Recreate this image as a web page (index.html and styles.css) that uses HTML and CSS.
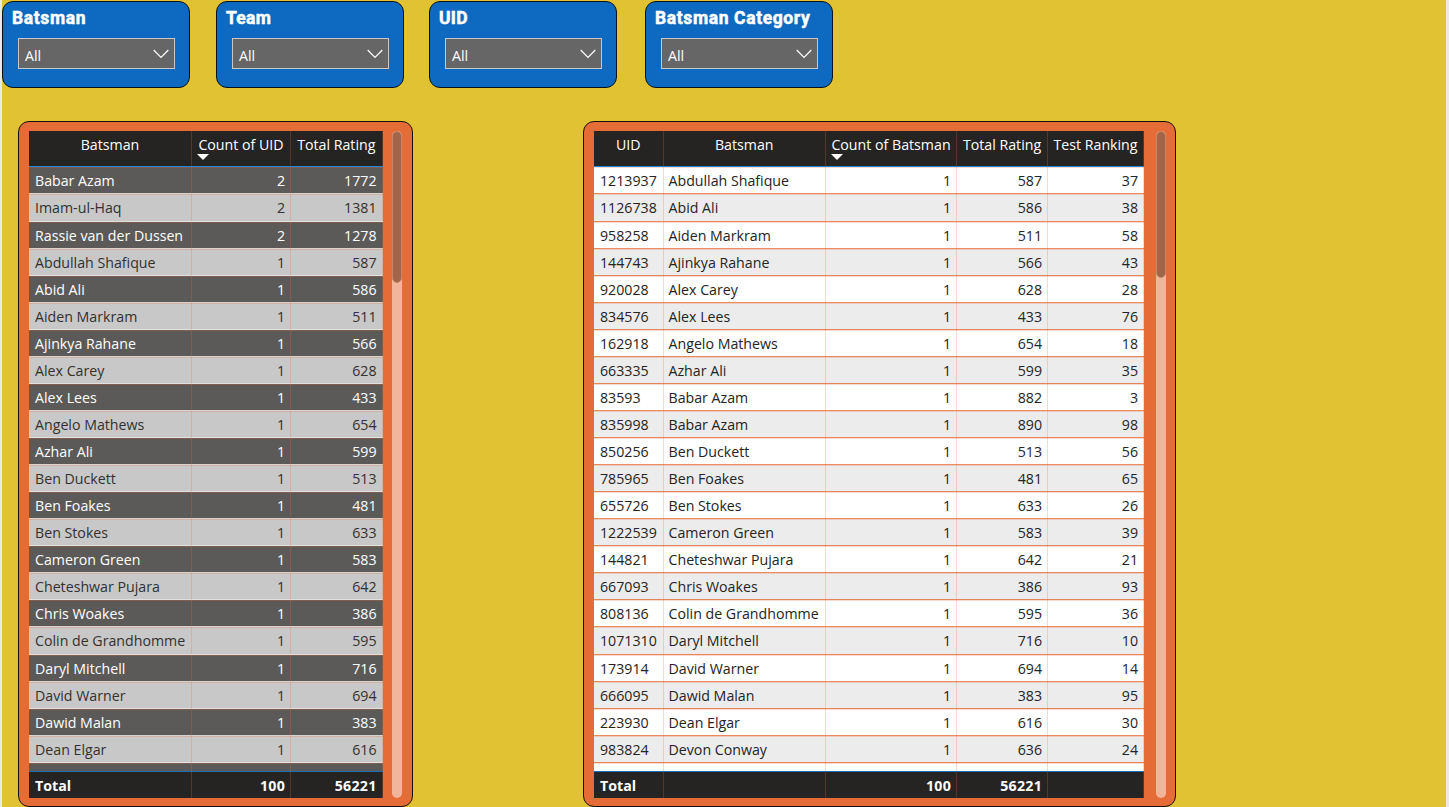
FILE: index.html
```html
<!DOCTYPE html>
<html lang="en">
<head>
<meta charset="utf-8">
<title>Batsman Rankings</title>
<link rel="stylesheet" href="styles.css">
</head>
<body>
<main class="report">
  <header class="slicers">
    <section class="slicer"><h2>Batsman</h2><div class="dropdown"><span>All</span><svg class="chevron" viewBox="0 0 16 10"><path d="M.7 1 8 8.3 15.3 1"/></svg></div></section>
    <section class="slicer"><h2 class="short">Team</h2><div class="dropdown"><span>All</span><svg class="chevron" viewBox="0 0 16 10"><path d="M.7 1 8 8.3 15.3 1"/></svg></div></section>
    <section class="slicer"><h2 class="short">UID</h2><div class="dropdown"><span>All</span><svg class="chevron" viewBox="0 0 16 10"><path d="M.7 1 8 8.3 15.3 1"/></svg></div></section>
    <section class="slicer"><h2>Batsman Category</h2><div class="dropdown"><span>All</span><svg class="chevron" viewBox="0 0 16 10"><path d="M.7 1 8 8.3 15.3 1"/></svg></div></section>
  </header>
  <div class="panels">
    <section class="panel dark">
      <div class="grid">
        <div class="row head"><span>Batsman</span><span class="sorted">Count of UID</span><span>Total Rating</span></div>
        <div class="body" id="ratings"></div>
        <div class="row total"><span>Total</span><span class="num">100</span><span class="num">56221</span></div>
      </div>
      <div class="track"><div class="thumb"></div></div>
    </section>
    <section class="panel light">
      <div class="grid">
        <div class="row head"><span>UID</span><span>Batsman</span><span class="sorted">Count of Batsman</span><span>Total Rating</span><span>Test Ranking</span></div>
        <div class="body" id="rankings"></div>
        <div class="row total"><span>Total</span><span></span><span class="num">100</span><span class="num">56221</span><span></span></div>
      </div>
      <div class="track"><div class="thumb"></div></div>
    </section>
  </div>
</main>
<script src="app.js"></script>
</body>
</html>
```
FILE: styles.css
```css
* { box-sizing: border-box; }
body { margin: 0; background: #ebe9e4; font: 14.2px "Open Sans", "Noto Sans", sans-serif; overflow: hidden; }
.report { height: 807px; margin: 0 3px 0 2px; background: #e0c232; }
.slicers { display: flex; height: 121px; padding-top: 1px; }
.slicer { width: 188px; height: 87px; margin-right: 26px; padding: 5px 14px 0 9px; background: #0e6ac0; border: 1.5px solid #07121c; border-radius: 11px; color: #fff; }
.slicer:nth-child(2) { margin-right: 25px; }
.slicer:nth-child(3) { margin-right: 28px; }
.slicer h2 { margin: 0 0 9px; height: 22px; font: 700 17.5px/23px Roboto, sans-serif; letter-spacing: .62px; white-space: nowrap; -webkit-text-stroke: .5px #fff; }
.slicer .short { letter-spacing: .3px; }
.dropdown { display: flex; align-items: center; justify-content: space-between; width: 157px; height: 31px; margin-left: 6px; padding: 3px 5px 0 6px; background: #666; border: 1px solid #c8c8c8; }
.chevron { width: 16px; height: 10px; margin-top: -2px; fill: none; stroke: #fff; stroke-width: 1.2; }
.panels { display: flex; gap: 170px; padding-left: 16px; }
.panel { display: flex; justify-content: space-between; height: 686px; padding: 9px 9px 8px 10px; background: #e66c37; border: 1px solid #1a100b; border-radius: 11px; }
.dark { width: 395px; padding-right: 10px; }
.light { width: 593px; }
.grid { height: 667px; color: #252423; }
.dark .grid { width: 353.5px; }
.light .grid { width: 550px; }
.row { display: grid; height: 27.067px; }
.dark .row { grid-template-columns: 163px 99px 91.5px; }
.light .row { grid-template-columns: 69.5px 162.5px 131px 91px 96px; }
.row span { padding: 0 6px; line-height: 27px; white-space: nowrap; border-right: 1px solid #e66c3740; }
.light .row span:nth-child(2) { padding-left: 5px; }
.row .num { text-align: right; padding-right: 5px; }
.head { height: 36px; background: #252423; color: #fff; border-bottom: 1px solid #2385dc; }
.row.head span, .light .head span:nth-child(2) { text-align: center; padding: 0; }
.head .sorted { position: relative; }
.sorted::after { content: ""; position: absolute; left: 5px; top: 23px; border: 6px solid transparent; border-top: 6px solid #fff; border-bottom: 0; }
.body { height: 604px; padding-top: .42px; overflow: hidden; background: #fff; }
.dark .body { background: #5c5a58; }
.body .row { background: #fff; border-bottom: 1px solid #e66c37cc; box-shadow: inset 0 1px #e66c3740; }
.body .row:nth-child(even) { background: #ececec; }
.dark .body .row { background: #5c5a58; color: #fff; border-bottom: 1px solid #d5d3d2; }
.dark .body .row:nth-child(even) { background: #c8c8c8; color: #323130; border-bottom-color: #e0e0e0; }
.total { height: 27px; background: #252423; color: #fff; border-top: 1px solid #1c6fb9; font-weight: 700; }
.total span { line-height: 27px; }
.total .num { letter-spacing: .25px; }
.track { width: 10px; height: 667px; background: #f2b59b; border-radius: 5px; }
.thumb { height: 152px; border: 1px solid #ca8569; border-radius: 5px; background: #a36549; }
.light .thumb { height: 147px; }
```
FILE: app.js
```javascript
const players = [
  [1213937, "Abdullah Shafique", 587, 37], [1126738, "Abid Ali", 586, 38],
  [958258, "Aiden Markram", 511, 58], [144743, "Ajinkya Rahane", 566, 43],
  [920028, "Alex Carey", 628, 28], [834576, "Alex Lees", 433, 76],
  [162918, "Angelo Mathews", 654, 18], [663335, "Azhar Ali", 599, 35],
  [83593, "Babar Azam", 882, 3], [835998, "Babar Azam", 890, 98],
  [850256, "Ben Duckett", 513, 56], [785965, "Ben Foakes", 481, 65],
  [655726, "Ben Stokes", 633, 26], [1222539, "Cameron Green", 583, 39],
  [144821, "Cheteshwar Pujara", 642, 21], [667093, "Chris Woakes", 386, 93],
  [808136, "Colin de Grandhomme", 595, 36], [1071310, "Daryl Mitchell", 716, 10],
  [173914, "David Warner", 694, 14], [666095, "Dawid Malan", 383, 95],
  [223930, "Dean Elgar", 616, 30], [983824, "Devon Conway", 636, 24]
];
const text = v => `<span>${v}</span>`;
const num = v => `<span class="num">${v}</span>`;
const row = cells => `<div class="row">${cells.join("")}</div>`;

const ratings = [["Babar Azam", 2, 1772], ["Imam-ul-Haq", 2, 1381], ["Rassie van der Dussen", 2, 1278]]
  .concat(players.filter(p => p[1] !== "Babar Azam" && p[1] !== "Devon Conway").map(p => [p[1], 1, p[2]]));
// The trailing blank row is the partially scrolled one at the bottom edge.
document.getElementById("ratings").innerHTML =
  ratings.slice(0, 22).map(r => row([text(r[0]), num(r[1]), num(r[2])])).join("") + row([text(""), num(""), num("")]);
document.getElementById("rankings").innerHTML =
  players.map(p => row([text(p[0]), text(p[1]), num(1), num(p[2]), num(p[3])])).join("") +
  row([text(""), text(""), num(""), num(""), num("")]);
```
